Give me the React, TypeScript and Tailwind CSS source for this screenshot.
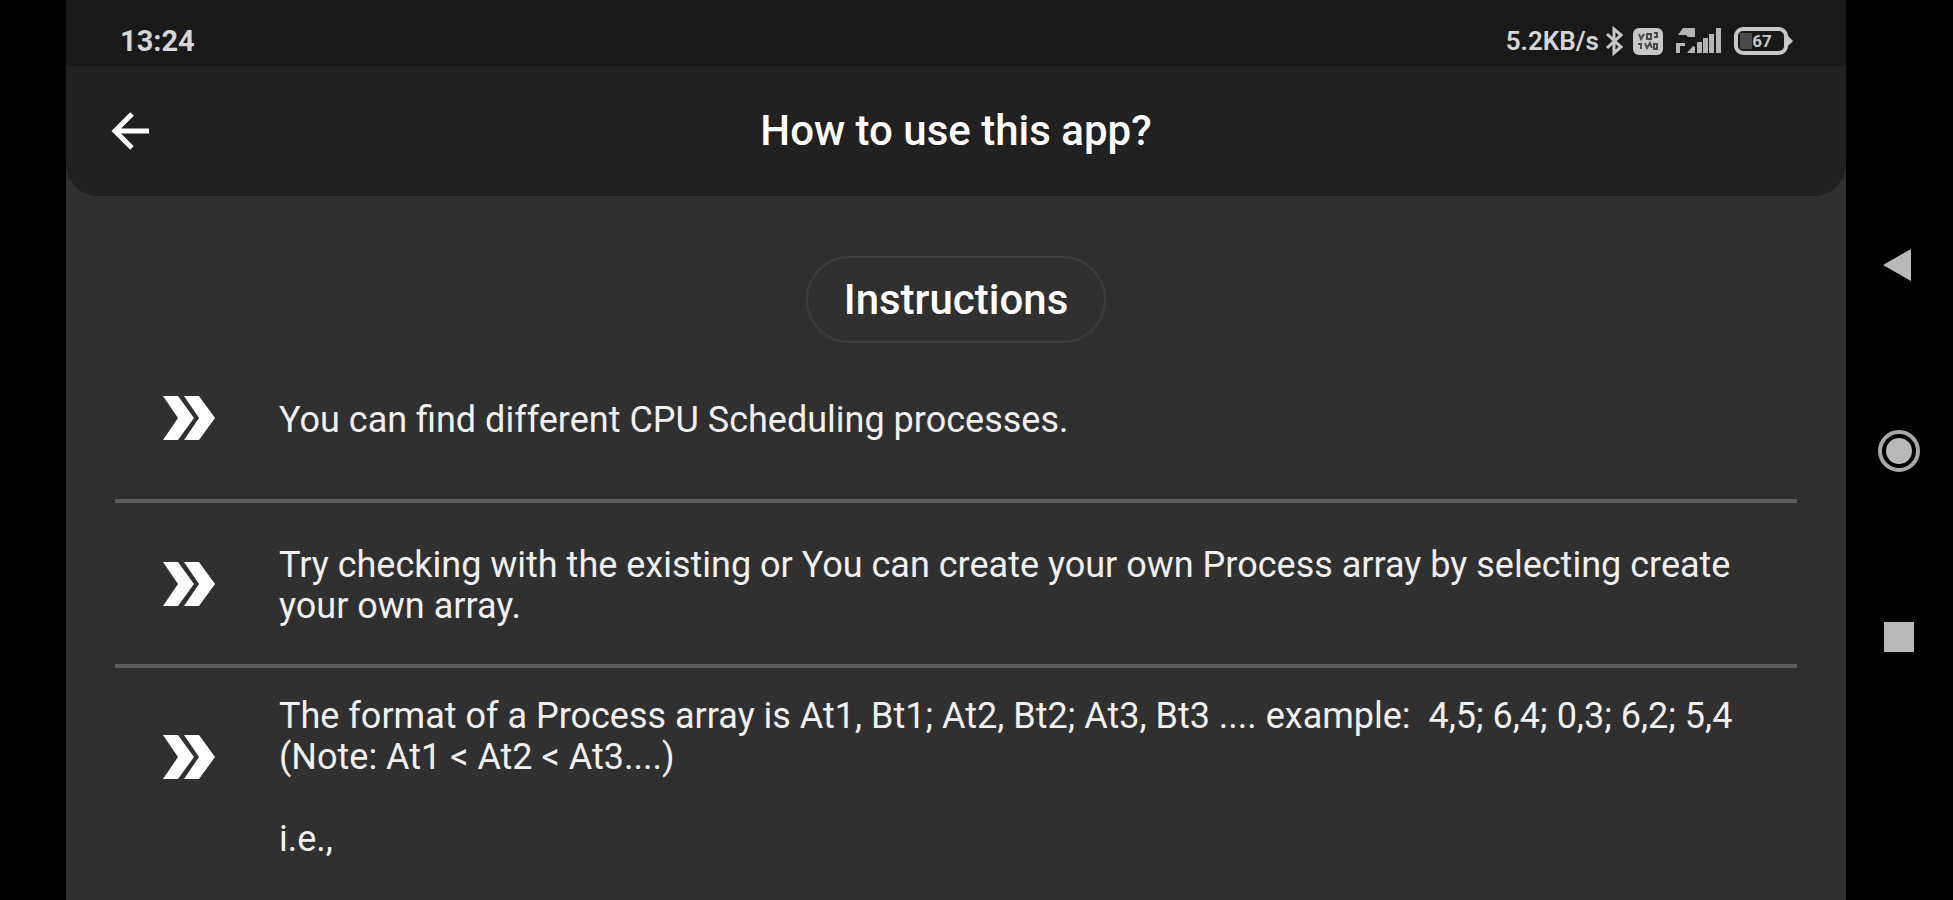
import type { ReactNode } from 'react';

function BackArrow() {
  return (
    <svg viewBox="0 0 40 40" className="h-10 w-10" fill="none" stroke="#fff" strokeWidth="5" aria-hidden="true">
      <path d="M39 20H5M22 3L5 20l17 17" />
    </svg>
  );
}

function DoubleChevron() {
  return (
    <svg viewBox="0 0 52 44" className="h-11 w-[52px] shrink-0" fill="#fff" aria-hidden="true">
      <path d="M0 0h15l16 22-16 22H0l15-22z" />
      <path d="M21 0h15l16 22-16 22H21l15-22z" />
    </svg>
  );
}

function BluetoothIcon() {
  return (
    <svg viewBox="0 0 18 30" className="h-[30px] w-[18px]" fill="none" stroke="#c8c8c8" strokeWidth="3" aria-hidden="true">
      <path d="M2 8l14 13-7 6V3l7 6L2 22" />
    </svg>
  );
}

function VoLteIcon() {
  return (
    <svg viewBox="0 0 30 27" className="h-[27px] w-[30px]" aria-hidden="true">
      <rect width="30" height="27" rx="6" fill="#c8c8c8" />
      <g fill="none" stroke="#4a4a4a" strokeWidth="2">
        <path d="M6 6l2 5 3-5M14 6h4v5h-4zM21 5h3v4h-3" />
        <path d="M5 16h3v5M12 15l2 5 3-5 2 5M21 16h3v5h-3z" />
      </g>
    </svg>
  );
}

function SignalIcon() {
  return (
    <svg viewBox="0 0 47 28" className="h-7 w-[47px]" fill="#b4b4b4" aria-hidden="true">
      <path d="M8 1h12v9h-7l-2-2H3z" />
      <path d="M1 16h9v3H5v7H1z" />
      <path d="M12 26l6-7 2 1v6z" />
      <rect x="22" y="15" width="5" height="11" />
      <rect x="28" y="11" width="5" height="15" />
      <rect x="34" y="7" width="5" height="19" />
      <rect x="41" y="1" width="5" height="25" />
    </svg>
  );
}

function BatteryIcon() {
  return (
    <svg viewBox="0 0 59 28" className="h-7 w-[59px]" aria-hidden="true">
      <rect x="2" y="2" width="50" height="24" rx="7" fill="none" stroke="#c8c8c8" strokeWidth="4" />
      <rect x="6" y="6" width="12" height="16" fill="#4a4a4a" />
      <path d="M54 9l5 5-5 5z" fill="#c8c8c8" />
      <text x="28" y="20" textAnchor="middle" fontFamily="Roboto, sans-serif" fontSize="17" fontWeight="700" fill="#c8c8c8">
        67
      </text>
    </svg>
  );
}

function StatusBar() {
  return (
    <div className="flex h-[66px] shrink-0 items-center justify-between bg-[#191919] pr-[53px] pl-[54px] pt-5 pb-1 text-[#d6d6d6]">
      <span className="text-[29px] leading-[42px] font-bold">13:24</span>
      <div className="flex items-center">
        <span className="mr-1.5 text-[26px] leading-[42px] font-semibold">5.2KB/s</span>
        <BluetoothIcon />
        <span className="w-2.5" />
        <VoLteIcon />
        <span className="w-3" />
        <SignalIcon />
        <span className="w-3" />
        <BatteryIcon />
      </div>
    </div>
  );
}

function Instruction({ children }: { children: ReactNode }) {
  return (
    <>
      <DoubleChevron />
      <div className="mt-1 ml-16 flex-1">{children}</div>
    </>
  );
}

function NavBar() {
  return (
    <nav className="flex w-[107px] shrink-0 flex-col items-center justify-center gap-36 pt-0.5 pr-0.5">
      <button type="button" aria-label="Back" className="h-[42px] w-[42px]">
        <svg viewBox="0 0 42 42" fill="#b9b9b9">
          <path d="M5 21L33 5v32z" />
        </svg>
      </button>
      <button type="button" aria-label="Home" className="h-[42px] w-[42px]">
        <svg viewBox="0 0 42 42" fill="#b9b9b9">
          <circle cx="21" cy="21" r="19" fill="none" stroke="#a8a8a8" strokeWidth="4" />
          <circle cx="21" cy="21" r="13" />
        </svg>
      </button>
      <button type="button" aria-label="Recent apps" className="h-[42px] w-[42px]">
        <svg viewBox="0 0 42 42" fill="#b9b9b9">
          <rect x="6" y="6" width="30" height="30" />
        </svg>
      </button>
    </nav>
  );
}

export default function App() {
  return (
    <div className="flex h-screen overflow-hidden bg-black pl-[66px] font-['Roboto',sans-serif]">
      <div className="flex min-w-0 flex-1 flex-col bg-[#303030]">
        <StatusBar />
        <header className="grid h-[130px] shrink-0 grid-cols-[1fr_auto_1fr] items-center rounded-b-[32px] bg-[#212121] px-11">
          <button type="button" aria-label="Go back" className="w-10">
            <BackArrow />
          </button>
          <h1 className="text-[42px] leading-12 font-medium text-white">How to use this app?</h1>
        </header>

        <main className="min-h-0 flex-1 overflow-hidden px-[49px] pt-[60px]">
          <h2 className="mx-auto flex h-[87px] w-fit items-center rounded-[44px] border-2 border-[#3d3d3d] px-9 text-[42px] leading-12 font-medium text-white">
            Instructions
          </h2>
          <ul className="text-[36px] leading-[41px] text-[#f0f0f0]">
            <li className="flex min-h-[160px] items-center border-b-4 border-[#5e5e5e] px-12 pb-1.5">
              <Instruction>You can find different CPU Scheduling processes.</Instruction>
            </li>
            <li className="flex min-h-[165px] items-center border-b-4 border-[#5e5e5e] px-12">
              <Instruction>
                Try checking with the existing or You can create your own Process array by selecting create your own array.
              </Instruction>
            </li>
            <li className="flex items-start px-12 pt-6">
              <div className="pt-[43px]">
                <DoubleChevron />
              </div>
              <div className="mt-1 ml-16 flex-1">
                <p className="whitespace-pre-wrap">
                  {'The format of a Process array is At1, Bt1; At2, Bt2; At3, Bt3 .... example:  4,5; 6,4; 0,3; 6,2; 5,4 (Note: At1 < At2 < At3....)'}
                </p>
                <p className="mt-[41px]">i.e.,</p>
              </div>
            </li>
          </ul>
        </main>
      </div>
      <NavBar />
    </div>
  );
}
